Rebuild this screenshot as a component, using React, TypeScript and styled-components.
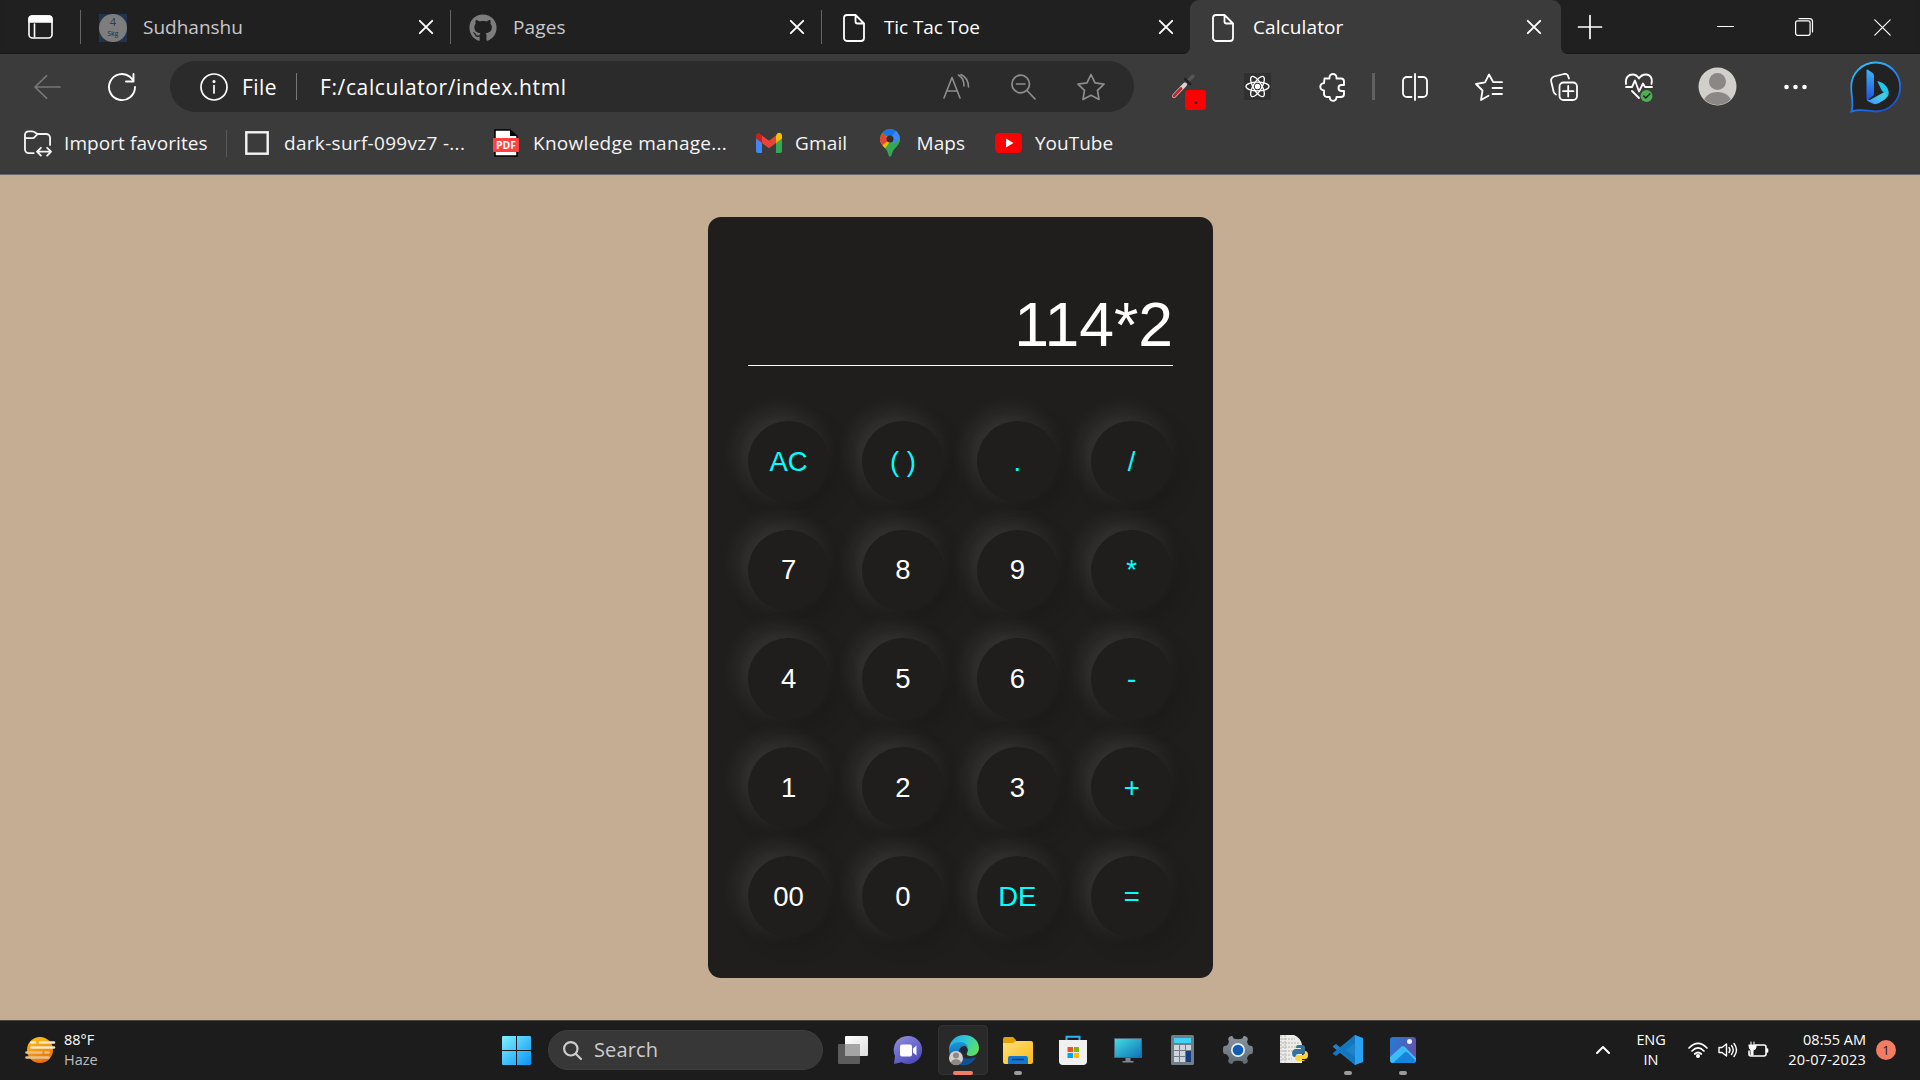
import React from "react";
import styled, { createGlobalStyle, css } from "styled-components";
import { FaGithub } from "react-icons/fa";

const Global = createGlobalStyle`
  * { box-sizing: border-box; }
  html, body { margin: 0; padding: 0; }
  body { width: 1920px; height: 1080px; overflow: hidden; background: #c5ad94; }
  svg { display: block; flex: none; overflow: visible; }
`;

const ui = `"Open Sans", "Noto Sans", sans-serif`;

const Screen = styled.div`
  width: 1920px;
  height: 1080px;
  display: flex;
  flex-direction: column;
  font-family: ${ui};
  color: #fff;
`;

/* Browser chrome */
const Chrome = styled.header`
  height: 175px;
  background: #3b3b3b;
  border-bottom: 1px solid #68686c;
`;
const TabStrip = styled.div`
  height: 54px;
  display: flex;
  align-items: center;
  background: #202020;
  box-shadow: inset 0 -2px 2px -1px #171717;
`;
const TabMenu = styled.div`
  width: 80px;
  padding-left: 28px;
`;
const TabBox = styled.div<{ $active?: boolean; $width: number }>`
  position: relative;
  width: ${(p) => p.$width}px;
  height: 54px;
  display: flex;
  align-items: center;
  padding-right: ${(p) => (p.$active ? 20 : 17.5)}px;
  color: #fff;
  ${(p) =>
    p.$active &&
    css`
      background: #3b3b3b;
      border-radius: 9px 9px 0 0;
      &::before,
      &::after {
        content: "";
        position: absolute;
        bottom: 0;
        width: 6px;
        height: 6px;
      }
      &::before {
        left: -6px;
        background: radial-gradient(circle at 0 0, transparent 5.5px, #3b3b3b 6px);
      }
      &::after {
        right: -6px;
        background: radial-gradient(circle at 100% 0, transparent 5.5px, #3b3b3b 6px);
      }
    `}
`;
const Divider = styled.i<{ $h: number; $w?: number; $color?: string; $ml?: number }>`
  flex: none;
  width: ${(p) => p.$w ?? 1}px;
  height: ${(p) => p.$h}px;
  margin-left: ${(p) => p.$ml ?? 0}px;
  background: ${(p) => p.$color ?? "#666"};
`;
const Favicon = styled.span`
  width: 28px;
  height: 28px;
  margin: 1px 16px 0 18px;
  display: flex;
  align-items: center;
  justify-content: center;
`;
const Avatar4 = styled.span`
  width: 28px;
  height: 28px;
  display: flex;
  background: #22344c;
`;
const AvatarDisc = styled.span`
  width: 28px;
  height: 28px;
  border-radius: 50%;
  background: #7d7d7d;
  color: #2b3d55;
  display: flex;
  flex-direction: column;
  align-items: center;
  gap: 3px;
  padding-top: 2px;
  b { font: 400 11px/11px ${ui}; }
  small { font: 600 6.5px/7px ${ui}; }
`;
const TabTitle = styled.span<{ $dim?: boolean; $ls?: number }>`
  flex: 1;
  font-size: 19px;
  line-height: 26px;
  letter-spacing: ${(p) => p.$ls ?? 0}px;
  white-space: nowrap;
  color: ${(p) => (p.$dim ? "#c8c8c8" : "#fff")};
`;
const WindowButtons = styled.div`
  display: flex;
  align-items: center;
  margin-left: auto;
  padding-right: 29px;
  gap: 61px;
`;

const Toolbar = styled.div`
  height: 65px;
  display: flex;
  align-items: center;
`;
const AddressBar = styled.div`
  width: 964px;
  height: 51px;
  margin-left: 34px;
  padding: 0 29px 0 30px;
  border-radius: 26px;
  background: #2b2b2b;
  display: flex;
  align-items: center;
`;
const Text = styled.span<{ $w: number; $size?: number; $ls?: number; $ml?: number }>`
  flex: none;
  width: ${(p) => p.$w}px;
  margin-left: ${(p) => p.$ml ?? 0}px;
  font-size: ${(p) => p.$size ?? 19}px;
  line-height: 26px;
  letter-spacing: ${(p) => p.$ls ?? 0}px;
  white-space: nowrap;
`;
const AddressActions = styled.div`
  margin-left: auto;
  display: flex;
  align-items: center;
  gap: 41px;
`;
const Item = styled.span<{ $ml: number }>`
  position: relative;
  flex: none;
  margin-left: ${(p) => p.$ml}px;
`;
const ExtBadge = styled.span`
  position: absolute;
  left: 14px;
  top: 16px;
  width: 21px;
  height: 20px;
  border-radius: 3px;
  background: #f00;
  color: #000;
  font: 700 14px/18px ${ui};
  text-align: center;
`;

const Bookmarks = styled.nav`
  height: 48px;
  display: flex;
  align-items: center;
  color: #f4f4f4;
`;

/* Calculator page */
const Page = styled.main`
  height: 845px;
  background: #c5ad94;
  display: flex;
  justify-content: center;
  align-items: flex-start;
  padding-top: 42px;
`;
const Card = styled.section`
  width: 505px;
  height: 761px;
  margin-left: 1px;
  padding: 40px;
  border-radius: 13px;
  background: #201e1d;
  font-family: "Liberation Sans", Arial, sans-serif;
`;
const Display = styled.div`
  height: 109px;
  border-bottom: 1px solid #fff;
  text-align: right;
  font-size: 62.5px;
  line-height: 72px;
  padding-top: 31px;
`;
const Keys = styled.div`
  margin-top: 54.9px;
  display: grid;
  grid-template-columns: repeat(4, 81.25px);
  column-gap: 33.1px;
  row-gap: 27.5px;
`;
const Key = styled.button<{ $accent?: boolean }>`
  width: 81.25px;
  height: 81.25px;
  padding: 0;
  border: 0;
  border-radius: 50%;
  background: transparent;
  box-shadow: -8px -8px 23px rgba(255, 255, 255, 0.11), 6px 6px 24px rgba(0, 0, 0, 0.2);
  color: ${(p) => (p.$accent ? "#0ff" : "#fff")};
  font: 27.5px "Liberation Sans", Arial, sans-serif;
`;

/* Taskbar */
const Taskbar = styled.footer`
  height: 60px;
  padding-bottom: 1px;
  background: #1c1c1c;
  border-top: 1px solid #4b4742;
  display: flex;
  align-items: center;
`;
const Weather = styled.div`
  display: flex;
  align-items: center;
  width: 502px;
  padding-left: 25px;
  gap: 8px;
`;
const Lines = styled.div<{ $align?: string; $w?: number; $ml?: number }>`
  width: ${(p) => (p.$w ? p.$w + "px" : "auto")};
  margin-left: ${(p) => p.$ml ?? 0}px;
  padding-bottom: 1px;
  display: flex;
  flex-direction: column;
  align-items: ${(p) => p.$align ?? "flex-start"};
  font-size: 14.5px;
  line-height: 20px;
  white-space: nowrap;
`;
const Fit = styled.span<{ $ls: number; $dim?: boolean }>`
  letter-spacing: ${(p) => p.$ls}px;
  color: ${(p) => (p.$dim ? "#bdbdbd" : "#fff")};
`;
const SearchPill = styled.div`
  width: 275px;
  height: 40px;
  margin: 0 1px 0 17px;
  padding-left: 14px;
  border-radius: 20px;
  background: #373737;
  border: 1px solid #3e3e3e;
  display: flex;
  align-items: center;
  color: #ccc;
`;
const AppSlot = styled.div<{ $w: number; $open?: boolean }>`
  width: ${(p) => p.$w}px;
  height: 50px;
  display: flex;
  flex-direction: column;
  align-items: center;
  justify-content: space-between;
  padding-top: 10px;
  border-radius: 5px;
  ${(p) => p.$open && css`background: #292929; box-shadow: inset 0 0 0 1px #333;`}
`;
const Mark = styled.i<{ $w: number; $color: string }>`
  width: ${(p) => p.$w}px;
  height: 4px;
  border-radius: 2px;
  background: ${(p) => p.$color};
`;
const Tray = styled.div`
  margin-left: auto;
  display: flex;
  align-items: center;
  padding-right: 24px;
`;
const Notice = styled.span`
  width: 20px;
  height: 20px;
  margin-left: 10px;
  border-radius: 50%;
  background: #f47c63;
  color: #1c1c1c;
  font-size: 13px;
  line-height: 20px;
  text-align: center;
`;

const line = { fill: "none", stroke: "currentColor", strokeLinecap: "round", strokeLinejoin: "round" } as const;

const CloseX = ({ s = 14, w = 1.9 }: { s?: number; w?: number }) => (
  <svg width={s} height={s} viewBox={`0 0 ${s} ${s}`} {...line} strokeWidth={w}>
    <path d={`M.8.8 ${s - 0.8} ${s - 0.8}M${s - 0.8}.8.8 ${s - 0.8}`} />
  </svg>
);
const Doc = () => (
  <svg width="22" height="28" viewBox="0 0 22 28" {...line} strokeWidth="1.8">
    <path d="M4 1h8.5L21 9.500V24a3 3 0 0 1-3 3H4a3 3 0 0 1-3-3V4a3 3 0 0 1 3-3ZM12.500 1v6.500a2 2 0 0 0 2 2H21" />
  </svg>
);

const Edge = () => (
  <svg width="31" height="30" viewBox="0 0 31 30">
    <defs>
      <linearGradient id="eg" x1="0" y1="0.2" x2="1" y2="0.6">
        <stop offset="0" stopColor="#23a9e6" /><stop offset=".5" stopColor="#30c9cf" /><stop offset="1" stopColor="#62e05a" />
      </linearGradient>
      <linearGradient id="eb" x1="0" y1="0" x2="0" y2="1">
        <stop offset="0" stopColor="#1c95dc" /><stop offset="1" stopColor="#0c59a4" />
      </linearGradient>
    </defs>
    <path d="M1 15C1 6 8 0 16 0c9 0 15 6 15 13 0 5-4 8-8 8-3 0-5-1-4-3 2-4 0-8-5-8C7 10 2 13 1 15Z" fill="url(#eg)" />
    <path d="M1 15c1-5 6-8 11-8 4 0 7 2 8 5-5-3-10 1-9 7 1 5 5 10 10 10-2 1-4 1-6 1C7 30 1 23 1 15Z" fill="url(#eb)" />
    <path d="M13 15c-2 7 4 11 15 7-2 4-6 8-11 8-6-2-9-9-4-15Z" fill="#124f94" />
    <circle cx="16.500" cy="15.500" r="3" fill="#1d2a33" />
    <circle cx="8" cy="23" r="7" fill="#d3d1cf" />
    <circle cx="8" cy="20.500" r="3" fill="#8b8886" />
    <path d="M3 28c0-5 10-5 10 0-3 3-7 3-10 0Z" fill="#8b8886" />
  </svg>
);

const Gear = () => (
  <svg width="30" height="30" viewBox="-15 -15 30 30">
    <defs><linearGradient id="gg" x1="0" y1="0" x2="0" y2="1"><stop offset="0" stopColor="#8b949d" /><stop offset="1" stopColor="#606a74" /></linearGradient></defs>
    <path d="M-8-13.500Q-5-15-4.500-11.500Q0-10 4.500-11.500Q5-15 8-13.500Q11-12 9-8.500Q10-4 13.500-4Q15-4 15 0Q15 4 13.500 4Q10 4 9 8.500Q11 12 8 13.500Q5 15 4.500 11.500Q0 10-4.500 11.500Q-5 15-8 13.500Q-11 12-9 8.500Q-10 4-13.500 4Q-15 4-15 0Q-15-4-13.500-4Q-10-4-9-8.500Q-11-12-8-13.500Z" fill="url(#gg)" />
    <circle r="7" fill="#e8edf0" /><circle r="5.300" fill="#0c5db5" />
  </svg>
);

const keys: [string, boolean?][] = [
  ["AC", true], ["( )", true], [".", true], ["/", true],
  ["7"], ["8"], ["9"], ["*", true],
  ["4"], ["5"], ["6"], ["-", true],
  ["1"], ["2"], ["3"], ["+", true],
  ["00"], ["0"], ["DE", true], ["=", true],
];

export default function App() {
  return (
    <Screen>
      <Global />
      <Chrome>
        <TabStrip>
          <TabMenu>
            <svg width="25" height="24" viewBox="0 0 25 24" {...line} strokeWidth="1.6">
              <rect x="1" y="1" width="23" height="22" rx="3.500" />
              <path d="M1 7V4a3 3 0 0 1 3-3h17a3 3 0 0 1 3 3v3Z" fill="#fff" />
              <path d="M6.500 9v13" />
            </svg>
          </TabMenu>
          <TabBox $width={370}>
            <Divider $h={34} />
            <Favicon><Avatar4><AvatarDisc><b>4</b><small>Skg</small></AvatarDisc></Avatar4></Favicon>
            <TabTitle $dim>Sudhanshu</TabTitle>
            <CloseX />
          </TabBox>
          <TabBox $width={371}>
            <Divider $h={34} />
            <Favicon><FaGithub size={28} color="#7d7d7d" /></Favicon>
            <TabTitle $dim $ls={0.15}>Pages</TabTitle>
            <CloseX />
          </TabBox>
          <TabBox $width={369}>
            <Divider $h={34} />
            <Favicon><Doc /></Favicon>
            <TabTitle $ls={-0.1}>Tic Tac Toe</TabTitle>
            <CloseX />
          </TabBox>
          <TabBox $width={371} $active>
            <Divider $h={34} $color="transparent" />
            <Favicon><Doc /></Favicon>
            <TabTitle $ls={0.1}>Calculator</TabTitle>
            <CloseX />
          </TabBox>
          <Item $ml={17}>
            <svg width="24" height="24" viewBox="0 0 24 24" {...line} strokeWidth="1.700"><path d="M12 .5v23M.5 12h23" /></svg>
          </Item>
          <WindowButtons>
            <svg width="17" height="17" viewBox="0 0 17 17" stroke="#fff"><path d="M0 7.500h17" /></svg>
            <svg width="18" height="18" viewBox="0 0 18 18" {...line} strokeWidth="1.200"><rect x=".6" y="2.800" width="14.500" height="14.500" rx="2" /><path d="M4 .6h10.500a3 3 0 0 1 3 3V14" /></svg>
            <CloseX s={17} w={1.2} />
          </WindowButtons>
        </TabStrip>

        <Toolbar>
          <Item $ml={34}>
            <svg width="27" height="24" viewBox="0 0 27 24" {...line} color="#777" strokeWidth="1.700"><path d="M26 12H1M12.500.8 1 12l11.500 11.200" /></svg>
          </Item>
          <Item $ml={47}>
            <svg width="28" height="28" viewBox="0 0 28 28" {...line} strokeWidth="1.900"><path d="M27 14A13 13 0 1 1 22 3.800L25.500 7.500M25.500 1v7.500H18" /></svg>
          </Item>
          <AddressBar>
            <svg width="28" height="28" viewBox="0 0 28 28" {...line} strokeWidth="1.700"><circle cx="14" cy="14" r="13" /><path d="M14 12.500v7.500" /><circle cx="14" cy="8.500" r=".7" fill="#fff" /></svg>
            <Text $ml={14} $w={54} $size={21} $ls={0.4}>File</Text>
            <Divider $h={27} $color="#777" />
            <Text $ml={23} $w={260} $size={21} $ls={0.62}>F:/calculator/index.html</Text>
            <AddressActions>
              <svg width="27" height="26" viewBox="0 0 27 26" {...line} color="#8e8e8e" strokeWidth="1.600"><path d="M1 24 9 3.500 17 24M4 17h10M15.500 1c3.500 2 5.500 5.500 5.500 11M18 .5c5 2.500 7.500 7 7.500 12.500" /></svg>
              <svg width="25" height="26" viewBox="0 0 25 26" {...line} color="#8e8e8e" strokeWidth="1.700"><circle cx="9.700" cy="10" r="8.800" /><path d="M16 16.500 24 25M5.500 10h8.500" /></svg>
              <svg width="28" height="28" viewBox="0 0 28 28" {...line} color="#8e8e8e" strokeWidth="1.700"><path d="m14 1.500 4 8.300 9 1.300-6.500 6.300 1.500 9.100-8-4.300-8 4.300 1.500-9.100L1 11.100l9-1.300Z" /></svg>
            </AddressActions>
          </AddressBar>
          <Item $ml={37}>
            <svg width="24" height="25" viewBox="0 0 24 25" strokeLinecap="round">
              <path d="M15 9 22 2" stroke="#555" strokeWidth="3.500" /><path d="m14 5 5 5" stroke="#222" strokeWidth="2.500" />
              <path d="M3 22 14 10.500" stroke="#d9d4d2" strokeWidth="4" /><path d="M3 22 10 14.500" stroke="#c3262c" strokeWidth="3" />
            </svg>
            <ExtBadge>.</ExtBadge>
          </Item>
          <Item $ml={49}>
            <svg width="27" height="27" viewBox="-13.500 -13.500 27 27" fill="none" stroke="#fff" strokeWidth="1.300">
              <rect x="-13.500" y="-13.500" width="27" height="27" fill="#303030" stroke="none" />
              <ellipse rx="11.500" ry="4.300" /><ellipse rx="11.500" ry="4.300" transform="rotate(60)" /><ellipse rx="11.500" ry="4.300" transform="rotate(120)" /><circle r="2" fill="#fff" />
            </svg>
          </Item>
          <Item $ml={49}>
            <svg width="25" height="28" viewBox="0 0 25 28" {...line} strokeWidth="1.900"><path d="M4.500 5.500h5V4.500a3.500 3.500 0 0 1 7 0v1h4.500a3 3 0 0 1 3 3v3.500h-2.500a3 3 0 0 0 0 6H24v3a3 3 0 0 1-3 3h-4.500v.5a3.400 3.400 0 0 1-6.800 0V24H7a3 3 0 0 1-3-3v-3.500a3.700 3.700 0 0 1 0-7.400Z" /></svg>
          </Item>
          <Divider $ml={27} $h={27} $w={3} $color="#606060" />
          <Item $ml={27}>
            <svg width="26" height="28" viewBox="0 0 26 28" {...line} strokeWidth="1.800"><path d="M13 1v26M9.500 4H5a4 4 0 0 0-4 4v12a4 4 0 0 0 4 4h4.500M16.500 4H21a4 4 0 0 1 4 4v12a4 4 0 0 1-4 4h-4.500" /></svg>
          </Item>
          <Item $ml={47}>
            <svg width="28" height="28" viewBox="0 0 28 28" {...line} strokeWidth="1.800"><path d="M27 9.200h-8.700L14 1.500 10 9.300 1 11l6.500 6.500L6 27l7.500-4.200M17.500 15H27M17.500 21H27" /></svg>
          </Item>
          <Item $ml={47}>
            <svg width="28" height="28" viewBox="0 0 28 28" {...line} strokeWidth="1.800"><rect x="9.500" y="9.500" width="17.500" height="17.500" rx="4" /><path d="M18.200 13v10.500M13 18.200h10.500M6 21.500c-1.500-.5-2-1.500-2.400-3L1.200 8.500C.8 6 1.500 4.500 4 3.500L14 1c2.500-.5 4 .5 4.500 3l.5 1.500" /></svg>
          </Item>
          <Item $ml={47}>
            <svg width="28" height="30" viewBox="0 0 28 30" {...line} strokeWidth="1.800">
              <path d="M1 12C0 5 4 2.500 7.500 2.500c3 0 5 1.500 6.500 4 1.500-2.500 4-4 7-4C25 2.500 28 6 26.500 12M1 15h6l3-6.500 4 11 4-8 2 3.500h7M7 19l7 7" />
              <circle cx="21.500" cy="24" r="6" fill="#4caf50" stroke="none" /><path d="m18.800 24 2 2 4-4" stroke="#222" strokeWidth="1.500" />
            </svg>
          </Item>
          <Item $ml={45}>
            <svg width="39" height="39" viewBox="0 0 39 39"><defs><clipPath id="av"><circle cx="19.500" cy="19.500" r="18.500" /></clipPath></defs><circle cx="19.500" cy="19.500" r="19" fill="#d1cfcc" /><g clipPath="url(#av)" fill="#8b8785"><circle cx="19.500" cy="14.500" r="8.500" /><ellipse cx="19.500" cy="36" rx="14" ry="11" /></g></svg>
          </Item>
          <Item $ml={47}>
            <svg width="23" height="6" viewBox="0 0 23 6" fill="#fff"><circle cx="2.500" cy="3" r="2.300" /><circle cx="11.500" cy="3" r="2.300" /><circle cx="20.500" cy="3" r="2.300" /></svg>
          </Item>
          <Item $ml={43}>
            <svg width="52" height="52" viewBox="0 0 52 52">
              <defs>
                <linearGradient id="bo" x1="0" y1="0" x2=".6" y2="1"><stop offset="0" stopColor="#29d3f5" /><stop offset=".5" stopColor="#2d8cf5" /><stop offset="1" stopColor="#1556d8" /></linearGradient>
                <linearGradient id="bv" x1="0" y1="0" x2="0" y2="1"><stop offset="0" stopColor="#3ab4f5" /><stop offset="1" stopColor="#2150e0" /></linearGradient>
                <linearGradient id="bb" x1="0" y1="1" x2="1" y2="0"><stop offset="0" stopColor="#3d8df8" /><stop offset=".4" stopColor="#41b8f8" /><stop offset="1" stopColor="#3ce0d0" /></linearGradient>
              </defs>
              <path d="M1.500 50.500C4 44 1.200 34 1.200 26A24.500 24.500 0 1 1 26 50.500c-8 0-14-3.500-24.500 0Z" fill="#222" stroke="url(#bo)" strokeWidth="1.800" />
              <path d="M16.500 9.500c0-1.500 1-1 2.500 0l3 2c1.500 1 2 2 2 3.500V34l-7 5.500c-.5-1-.5-2-.5-3Z" fill="url(#bv)" />
              <path d="M17 38c2 2 4 .5 6-.7l15-8.300c1.500 4-1 8-4 10l-5 3c-2.500 1.500-5 1.500-7.500 0C18.500 40.500 17 40 17 38Z" fill="url(#bb)" />
              <path d="M27.500 20c5.500 1.500 11 5 11 11.500 0 2-.5 3.500-1.500 4.500-.5-3-2-4.500-5-6l-4.300-9Z" fill="#22c6ec" />
            </svg>
          </Item>
        </Toolbar>

        <Bookmarks>
          <Item $ml={24}>
            <svg width="28" height="27" viewBox="0 0 29 27" {...line} strokeWidth="1.900"><path d="M10 23.500H5a4 4 0 0 1-4-4V4.500A3.500 3.500 0 0 1 4.500 1h4c3 0 3.500 2.700 6 2.700H23a4 4 0 0 1 4 4V15M1 8h8c3 0 3-4 5.500-4.300M14 22h13M17.500 18 13.500 22l4 4M24 18l4 4-4 4" /></svg>
          </Item>
          <Text $ml={12} $w={162} $ls={0.08}>Import favorites</Text>
          <Divider $h={27} $color="#585858" />
          <Item $ml={18}>
            <svg width="24" height="24" viewBox="0 0 24 24"><rect x="1.300" y="1.300" width="21.400" height="21.400" fill="none" stroke="#f4f4f4" strokeWidth="2.400" /></svg>
          </Item>
          <Text $ml={15} $w={209} $ls={0.3}>dark-surf-099vz7 -...</Text>
          <svg width="26" height="28" viewBox="0 0 26 28"><path d="M2 1h15l7 6v20H2Z" fill="#fff" stroke="#000" strokeWidth="1.500" /><path d="M17 1v6h7Z" fill="#000" /><rect y="9" width="26" height="14" rx="1" fill="#ff4141" /><text x="13" y="19.800" textAnchor="middle" fontSize="10.500" fontWeight="700" fill="#fff" fontFamily="Open Sans, sans-serif">PDF</text></svg>
          <Text $ml={14} $w={223} $ls={0.28}>Knowledge manage...</Text>
          <svg width="26" height="20" viewBox="0 0 26 20"><path d="M0 3v15a2 2 0 0 0 2 2h4V7Z" fill="#4285f4" /><path d="M26 3v15a2 2 0 0 1-2 2h-4V7Z" fill="#34a853" /><path d="M20 2.500V10l6-4.500V3c0-3-3-4-5-2.300Z" fill="#fbbc04" /><path d="M6 10V2.500l7 5.200 7-5.200V10l-7 5.300Z" fill="#ea4335" /><path d="M0 3v2.500L6 10V2.500L5 1.500C3-.8 0 0 0 3Z" fill="#c5221f" /></svg>
          <Text $ml={13} $w={85} $ls={0.15}>Gmail</Text>
          <svg width="20" height="28" viewBox="0 0 20 28"><defs><clipPath id="pin"><path d="M10 0a10 10 0 0 1 10 10c0 7-7 8-8.500 16-.5 2-2.500 2-3 0C7 18 0 17 0 10A10 10 0 0 1 10 0Z" /></clipPath></defs><g clipPath="url(#pin)"><path d="M0 0h20v28H0Z" fill="#34a853" /><path d="M20-2 4 21l-7-7Z" fill="#fbbc04" /><path d="M0 3 10 10-2 20Z" fill="#ea4335" /><path d="m2 3 8 7 8-9-8-3Z" fill="#1a73e8" /><path d="M10 10 18-1l4 10-8 6Z" fill="#4285f4" /><path d="M20 9 8 24l8 4 6-12Z" fill="#34a853" /></g><circle cx="10" cy="10" r="3.500" fill="#303030" /></svg>
          <Text $ml={16.5} $w={78.5} $ls={0.1}>Maps</Text>
          <svg width="27" height="20" viewBox="0 0 27 20"><rect width="27" height="20" rx="4.500" fill="#f00" /><path d="m11 5.500 7.500 4.500-7.500 4.500Z" fill="#fff" /></svg>
          <Text $ml={13} $w={80}>YouTube</Text>
        </Bookmarks>
      </Chrome>

      <Page>
        <Card>
          <Display>114*2</Display>
          <Keys>
            {keys.map(([k, a]) => (
              <Key key={k} $accent={a}>{k}</Key>
            ))}
          </Keys>
        </Card>
      </Page>

      <Taskbar>
        <Weather>
          <svg width="31" height="28" viewBox="0 0 31 28" strokeLinecap="round" strokeWidth="2.600">
            <defs><linearGradient id="sun" x1=".2" y1="0" x2=".6" y2="1"><stop offset="0" stopColor="#ffc21a" /><stop offset="1" stopColor="#ee6a0a" /></linearGradient></defs>
            <circle cx="15" cy="14" r="13" fill="url(#sun)" />
            <path d="M6.500 6.500H10M15 6.500h14M6.500 11.500H29" stroke="#f7e9c4" /><path d="M1.500 16.500h15M20.500 16.500h3M1.500 21.500h22" stroke="#e2c48c" />
          </svg>
          <Lines><Fit $ls={0}>88°F</Fit><Fit $ls={0} $dim>Haze</Fit></Lines>
        </Weather>
        <svg width="29" height="29" viewBox="0 0 29 29"><defs><linearGradient id="win" x1="0" y1="0" x2="1" y2="1"><stop offset="0" stopColor="#7ff1ff" /><stop offset="1" stopColor="#0a93f8" /></linearGradient></defs><path d="M0 1q0-1 1-1h13v14H0ZM15 0h13q1 0 1 1v13H15ZM0 15h14v14H1q-1 0-1-1ZM15 15h14v13q0 1-1 1H15Z" fill="url(#win)" /></svg>
        <SearchPill>
          <svg width="19" height="19" viewBox="0 0 19 19" {...line} strokeWidth="2.200"><circle cx="7.800" cy="7.800" r="6.700" /><path d="m13 13 5 5" /></svg>
          <Text $ml={12} $w={70} $size={20} $ls={0.15}>Search</Text>
        </SearchPill>
        <AppSlot $w={58}>
          <svg width="30" height="30" viewBox="0 0 30 30"><defs><linearGradient id="tv" x1="0" y1="0" x2="1" y2="1"><stop offset="0" stopColor="#fff" /><stop offset="1" stopColor="#ddd" /></linearGradient></defs><rect x="0" y="9" width="22" height="20" rx="1" fill="#5c5c5c" /><rect x="7" y="1" width="23" height="20" rx="1" fill="url(#tv)" /><rect x="7" y="9" width="15" height="12" fill="#a5a5a5" /></svg>
        </AppSlot>
        <AppSlot $w={52}>
          <svg width="30" height="30" viewBox="0 0 30 30"><defs><linearGradient id="ch" x1="0" y1="0" x2=".6" y2="1"><stop offset="0" stopColor="#a98fc4" /><stop offset=".3" stopColor="#7b7cd8" /><stop offset="1" stopColor="#504bb8" /></linearGradient></defs><path d="M15 1a14 14 0 1 1-6.500 26.300L1 29l1-8A14 14 0 0 1 15 1Z" fill="url(#ch)" /><rect x="7" y="9.500" width="12" height="12" rx="2" fill="#fff" /><path d="m20 13.500 3.500-3v10l-3.500-3Z" fill="#fff" /></svg>
        </AppSlot>
        <Divider $h={0} $w={4} />
        <AppSlot $w={50} $open><Edge /><Mark $w={20} $color="#f47c63" /></AppSlot>
        <Divider $h={0} $w={2} />
        <AppSlot $w={56}>
          <svg width="30" height="30" viewBox="0 0 30 30"><defs><linearGradient id="fo" x1="0" y1="0" x2="1" y2="1"><stop offset="0" stopColor="#ffe07a" /><stop offset="1" stopColor="#fcb912" /></linearGradient></defs><path d="M0 4q0-2 2-2h8l3 3v6H0Z" fill="#e3a008" /><path d="M0 8h10l3-2h15q2 0 2 2v19q0 2-2 2H2q-2 0-2-2Z" fill="url(#fo)" /><path d="M5 29v-6q0-2 2-2h16q2 0 2 2v6Z" fill="#0f78d0" /><path d="M9 24.500h12" stroke="#073c78" strokeWidth="1.500" /></svg>
          <Mark $w={8} $color="#9b9b9b" />
        </AppSlot>
        <AppSlot $w={54}>
          <svg width="30" height="30" viewBox="0 0 30 30"><path d="M8.500 7V1.800h13V7" fill="none" stroke="#2bb5f0" strokeWidth="2" /><path d="M1 5h28v21q0 4-4 4H5q-4 0-4-4Z" fill="#f0f0f0" /><path d="M9.500 12H15v5H9.500Z" fill="#f25022" /><path d="M16 12h5v5h-5Z" fill="#7fba00" /><path d="M9.500 18H15v5H9.500Z" fill="#00a4ef" /><path d="M16 18h5v5h-5Z" fill="#ffb900" /></svg>
        </AppSlot>
        <AppSlot $w={56}>
          <svg width="28" height="30" viewBox="0 0 28 30"><defs><linearGradient id="mo" x1="0" y1="0" x2="1" y2="1"><stop offset="0" stopColor="#3fdfe0" /><stop offset="1" stopColor="#1070b8" /></linearGradient></defs><path d="M.5 3.500h27v19H.5Z" fill="url(#mo)" stroke="#4c6478" /><path d="M11.500 23h5v3h3v1.500h-11V26h3Z" fill="#7c8790" /></svg>
        </AppSlot>
        <AppSlot $w={53}>
          <svg width="23" height="30" viewBox="0 0 23 30"><rect width="23" height="30" rx="1.500" fill="#737d87" /><rect x="3" y="3" width="17" height="5" fill="#40d3f7" /><g fill="#ccd6dc"><path d="M3 10h5v5H3ZM9 10h5v5H9ZM15 10h5v5h-5ZM3 16h5v5H3ZM9 16h5v5H9ZM3 22h5v5H3ZM9 22h5v5H9Z" /></g><path d="M15 16h5v11h-5Z" fill="#10407f" /></svg>
        </AppSlot>
        <AppSlot $w={58}><Gear /></AppSlot>
        <AppSlot $w={53}>
          <svg width="29" height="30" viewBox="0 0 29 30"><path d="M1 0h14q7 3 8 10v18H1Z" fill="#ececea" /><path d="M3 4h13M3 8h17M3 12h15M3 16h10M3 20h9M3 24h10M6 0v28M2 0v28" stroke="#b4b4b2" strokeDasharray="2 1" /><path d="M19 10h4q3 0 3 3v3q0 3-3 3h-4q-2 0-2 2v1h-2q-2-1-2-4t3-4h6v-1h-5q0-3 2-3Z" fill="#35739f" /><path d="M23 26h-4q-3 0-3-3 0-3 3-3h4q3 0 3-4 3 0 3 4t-3 4h-5v1h5q0 1-3 1Z" fill="#ffd43b" /></svg>
        </AppSlot>
        <AppSlot $w={56}>
          <svg width="30" height="30" viewBox="0 0 30 30"><path d="M22 0 8 13 3 9 0 11v1l22 18Z" fill="#1f82c9" /><path d="M22 30 8 17l-5 4-3-2v-1L22 0v8l-9 7 9 7Z" fill="#1177c0" /><path d="m22 0 8 3v24l-8 3Z" fill="#2aa2f2" /></svg>
          <Mark $w={8} $color="#9b9b9b" />
        </AppSlot>
        <AppSlot $w={54}>
          <svg width="26" height="30" viewBox="0 0 26 30"><defs><linearGradient id="ph" x1="0" y1="0" x2="1" y2=".5"><stop offset="0" stopColor="#1c7fd8" /><stop offset="1" stopColor="#6a50a8" /></linearGradient><clipPath id="pc"><rect y="2" width="26" height="26" rx="3" /></clipPath></defs><g clipPath="url(#pc)"><path d="M0 0h26v30H0Z" fill="url(#ph)" /><path d="m0 22 11-10q2-2 4 0l14 14-4 4H0Z" fill="#39bdf4" /><path d="m3 28 11-10q2-2 4 0l10 10Z" fill="#1684dc" /></g><circle cx="19.500" cy="6.500" r="2.500" fill="#f4f0f8" /></svg>
          <Mark $w={8} $color="#9b9b9b" />
        </AppSlot>

        <Tray>
          <svg width="14" height="8" viewBox="0 0 14 8" {...line} strokeWidth="2"><path d="m1 7 6-6 6 6" /></svg>
          <Lines $ml={4} $w={74} $align="center"><Fit $ls={-0.1}>ENG</Fit><Fit $ls={0}>IN</Fit></Lines>
          <svg width="20" height="16" viewBox="0 0 20 16" {...line} strokeWidth="1.700"><path d="M1 6q9-9 18 0M4 9q6-6 12 0M6.700 12q3.300-3 6.600 0" /><circle cx="10" cy="14" r="1.200" fill="#fff" /></svg>
          <Item $ml={10}><svg width="20" height="16" viewBox="0 0 20 16" {...line} strokeWidth="1.400"><path d="M1 5.500h3L8.500 2v12L4 10.500H1ZM11 5.500q2 2.500 0 5M13.500 3.500q3.500 4.500 0 9M16 1.500q5 6.500 0 13" /></svg></Item>
          <Item $ml={10}><svg width="21" height="16" viewBox="0 0 21 16" {...line} strokeWidth="1.600"><path d="M8 3h8a2 2 0 0 1 2 2v7a2 2 0 0 1-2 2H3a2 2 0 0 1-2-2V9M19.500 7v3" /><path d="M3 0v3M6 0v3M1 3h7v2q0 3-3 3v5H3V8Q1 7 1 4Z" fill="#fff" strokeWidth="1" /></svg></Item>
          <Lines $w={97} $align="flex-end"><Fit $ls={0}>08:55 AM</Fit><Fit $ls={0.2}>20-07-2023</Fit></Lines>
          <Notice>1</Notice>
        </Tray>
      </Taskbar>
    </Screen>
  );
}
